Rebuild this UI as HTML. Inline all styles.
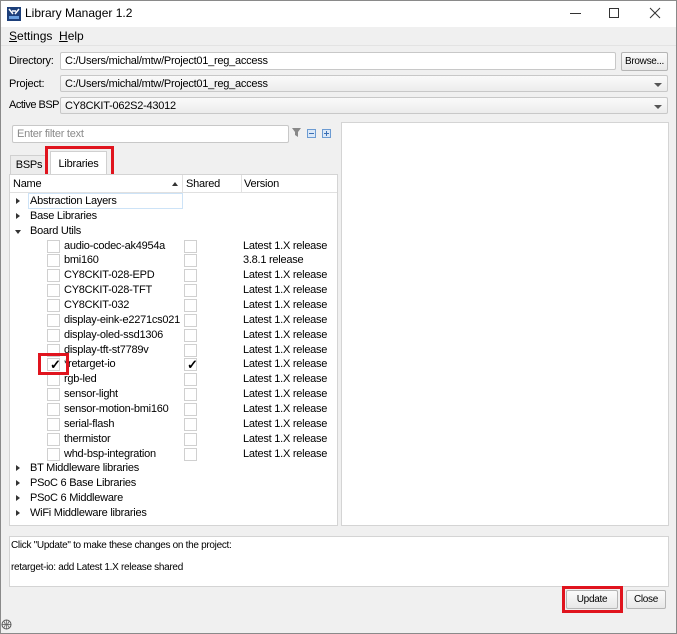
<!DOCTYPE html>
<html><head><meta charset="utf-8"><style>
*{box-sizing:border-box;margin:0;padding:0}
body{width:677px;height:634px;background:#f0f0f0;font-family:"Liberation Sans",sans-serif;font-size:11px;letter-spacing:-0.25px;color:#000;position:relative;overflow:hidden}
.a{position:absolute}
.win{left:0;top:0;width:677px;height:634px;border:1px solid #8a8a8a}
.inp{background:#fff;border:1px solid #c8c8c8;border-radius:2px;padding-left:4px;line-height:16px;white-space:nowrap;overflow:hidden}
.combo{background:linear-gradient(#fafafa,#ececec);border:1px solid #c8c8c8;border-radius:2px;padding-left:4px;line-height:16px}
.arr{position:absolute;right:5px;top:7px;width:0;height:0;border-left:4px solid transparent;border-right:4px solid transparent;border-top:4px solid #555}
.btn{background:linear-gradient(#fbfbfb,#e8e8e8);border:1px solid #b5b5b5;border-radius:2px;text-align:center;line-height:17px}
.row{position:absolute;left:0;height:15px;line-height:15px;white-space:nowrap}
.cb{position:absolute;width:13px;height:13px;border:1px solid #d0d0d0;background:#fff;top:1px}
.tri{position:absolute;width:0;height:0}
.tr{border-top:3.5px solid transparent;border-bottom:3.5px solid transparent;border-left:4px solid #333;top:4px;left:7px}
.td{border-left:3.5px solid transparent;border-right:3.5px solid transparent;border-top:4px solid #333;top:6px;left:6px}
.red{position:absolute;border:3px solid #e0141e}
.ck{position:absolute;font-size:13px;font-weight:bold;line-height:13px;left:2px;top:-1px}
.sm{font-size:10px;letter-spacing:-0.3px}
</style></head><body>
<div class="a win"></div>
<div class="a" style="left:1px;top:1px;width:675px;height:26px;background:#fff"></div>
<svg class="a" style="left:7px;top:7px" width="14" height="14"><rect width="14" height="14" fill="#1c3f7a"/><path d="M2 2l4 5M12 2l-4 5M5 4h4" stroke="#fff" stroke-width="1.5"/><rect x="2" y="9" width="10" height="3" fill="#6aa0e0"/></svg>
<div class="a" style="left:25px;top:6px;font-size:12px;letter-spacing:0">Library Manager 1.2</div>
<div class="a" style="left:570px;top:13px;width:11px;height:1px;background:#333"></div>
<div class="a" style="left:609px;top:8px;width:10px;height:10px;border:1px solid #333"></div>
<svg class="a" style="left:649px;top:7px" width="12" height="12"><path d="M1 1l10 10M11 1L1 11" stroke="#333" stroke-width="1"/></svg>
<div class="a" style="left:9px;top:29px;font-size:12px;letter-spacing:0"><u>S</u>ettings&nbsp;&nbsp;<u>H</u>elp</div>
<div class="a" style="left:1px;top:45px;width:675px;height:1px;background:#e3e3e3"></div>

<div class="a" style="left:9px;top:55px">Directory:</div>
<div class="a inp" style="left:60px;top:52px;width:556px;height:18px">C:/Users/michal/mtw/Project01_reg_access</div>
<div class="a btn sm" style="left:621px;top:52px;width:47px;height:19px">Browse...</div>
<div class="a" style="left:9px;top:78px">Project:</div>
<div class="a combo" style="left:60px;top:75px;width:608px;height:17px">C:/Users/michal/mtw/Project01_reg_access<div class="arr"></div></div>
<div class="a" style="left:9px;top:99px;letter-spacing:-0.5px">Active BSP:</div>
<div class="a combo" style="left:60px;top:97px;width:608px;height:17px">CY8CKIT-062S2-43012<div class="arr"></div></div>

<div class="a inp" style="left:12px;top:125px;width:277px;height:18px;color:#8a8a8a">Enter filter text</div>
<svg class="a" style="left:292px;top:128px" width="10" height="10"><path d="M0 0h9l-3 4v5l-3-2V4z" fill="#888"/></svg>
<svg class="a" style="left:307px;top:129px" width="9" height="9"><rect x=".5" y=".5" width="8" height="8" fill="#dbe8f7" stroke="#6c9bd2"/><path d="M2 4.5h5" stroke="#3a6fb5"/></svg>
<svg class="a" style="left:322px;top:129px" width="9" height="9"><rect x=".5" y=".5" width="8" height="8" fill="#dbe8f7" stroke="#6c9bd2"/><path d="M2 4.5h5M4.5 2v5" stroke="#3a6fb5"/></svg>

<div class="a" style="left:341px;top:122px;width:328px;height:404px;background:#fff;border:1px solid #d4d4d4"></div>

<div class="a" style="left:10px;top:155px;width:38px;height:20px;border:1px solid #d0d0d0;border-bottom:none;background:#ececec;text-align:center;line-height:19px">BSPs</div>
<div class="a" style="left:50px;top:151px;width:57px;height:24px;border:1px solid #d0d0d0;border-bottom:none;background:#fff;text-align:center;line-height:24px">Libraries</div>
<div class="red" style="left:45px;top:146px;width:69px;height:33px"></div>

<div class="a" style="left:9px;top:174px;width:329px;height:352px;background:#fff;border:1px solid #d4d4d4">
 <div class="a" style="left:0;top:0;width:327px;height:18px;border-bottom:1px solid #e0e0e0;background:#fff"></div>
 <div class="a" style="left:3px;top:3px">Name</div>
 <div class="a" style="left:162px;top:7px;border-left:3.5px solid transparent;border-right:3.5px solid transparent;border-bottom:4px solid #333;width:0;height:0"></div>
 <div class="a" style="left:172px;top:0;width:1px;height:18px;background:#e0e0e0"></div>
 <div class="a" style="left:176px;top:3px">Shared</div>
 <div class="a" style="left:231px;top:0;width:1px;height:18px;background:#e0e0e0"></div>
 <div class="a" style="left:234px;top:3px">Version</div>
 <div class="a" style="left:18px;top:18px;width:155px;height:16px;border:1px solid #cde3f7"></div>
</div>
<div id="tree" class="a" style="left:9px;top:194px;width:329px"></div>
<div class="red" style="left:38px;top:353px;width:31px;height:22px"></div>

<div class="a" style="left:9px;top:536px;width:660px;height:51px;background:#fff;border:1px solid #d4d4d4"></div>
<div class="a sm" style="left:11px;top:540px">Click "Update" to make these changes on the project:</div>
<div class="a sm" style="left:11px;top:562px">retarget-io: add Latest 1.X release shared</div>
<div class="a btn sm" style="left:566px;top:590px;width:52px;height:19px">Update</div>
<div class="red" style="left:562px;top:586px;width:61px;height:27px"></div>
<div class="a btn sm" style="left:626px;top:590px;width:40px;height:19px">Close</div>
<svg class="a" style="left:1px;top:619px" width="11" height="11"><circle cx="5.5" cy="5.5" r="4.5" fill="none" stroke="#555"/><path d="M1 5.5h9M5.5 1v9M3 2.5q2.5 3 0 6M8 2.5q-2.5 3 0 6" stroke="#555" fill="none" stroke-width=".7"/></svg>
<script>
var rows=[["t","Abstraction Layers"],["t","Base Libraries"],["d","Board Utils"],
["c","audio-codec-ak4954a","Latest 1.X release"],["c","bmi160","3.8.1 release"],["c","CY8CKIT-028-EPD","Latest 1.X release"],["c","CY8CKIT-028-TFT","Latest 1.X release"],["c","CY8CKIT-032","Latest 1.X release"],["c","display-eink-e2271cs021","Latest 1.X release"],["c","display-oled-ssd1306","Latest 1.X release"],["c","display-tft-st7789v","Latest 1.X release"],["k","*retarget-io","Latest 1.X release"],["c","rgb-led","Latest 1.X release"],["c","sensor-light","Latest 1.X release"],["c","sensor-motion-bmi160","Latest 1.X release"],["c","serial-flash","Latest 1.X release"],["c","thermistor","Latest 1.X release"],["c","whd-bsp-integration","Latest 1.X release"],
["t","BT Middleware libraries"],["t","PSoC 6 Base Libraries"],["t","PSoC 6 Middleware"],["t","WiFi Middleware libraries"]];
var h="";rows.forEach(function(r,i){var y=(i*14.86).toFixed(2);h+='<div class="row" style="top:'+y+'px;width:329px">';
if(r[0]=="t"||r[0]=="d"){h+='<div class="tri '+(r[0]=="t"?"tr":"td")+'"></div><span class="a" style="left:21px">'+r[1]+'</span>';}
else{var k=r[0]=="k";h+='<div class="cb" style="left:38px">'+(k?'<span class="ck">✓</span>':'')+'</div><span class="a" style="left:55px">'+r[1]+'</span><div class="cb" style="left:175px">'+(k?'<span class="ck">✓</span>':'')+'</div><span class="a" style="left:234px">'+r[2]+'</span>';}
h+='</div>';});document.getElementById("tree").innerHTML=h;
</script>
</body></html>
